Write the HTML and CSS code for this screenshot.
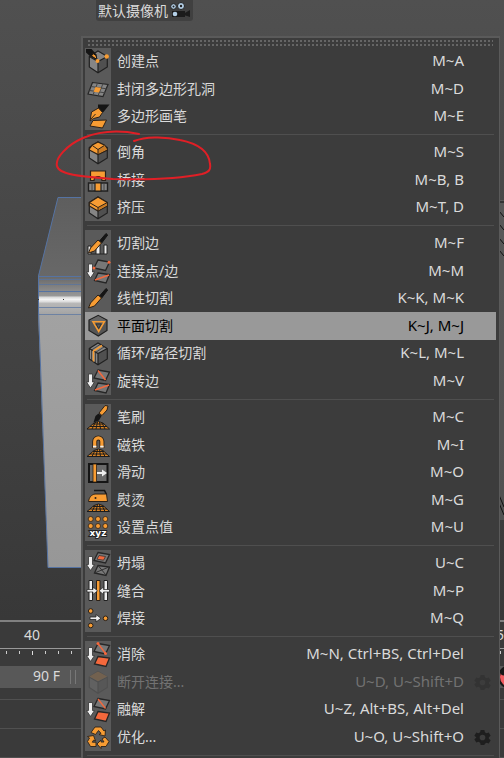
FILE: index.html
```html
<!DOCTYPE html>
<html lang="zh-CN">
<head>
    <meta charset="UTF-8">
    <meta name="viewport" content="width=device-width, initial-scale=1.0">
    <title>多边形菜单</title>
    <link rel="stylesheet" href="styles.css">
</head>
<body>
<!-- 公用图标 -->
<svg class="symbols" aria-hidden="true">
    <symbol id="down" viewBox="0 0 26 27">
        <path d="M3.500 6.500h4v8h2L5.500 20.500l-4-6h2z" fill="#eee" stroke="#333" stroke-width=".8"/>
    </symbol>
    <symbol id="hill" viewBox="0 0 26 27">
        <path d="M2 25l7-6 4.500-1.500 4.500 1.500 6.500 6z" fill="#d98324" stroke="#1b1b1b"/>
        <path d="M5 22.500h17M8 20h11M7 25l3-6M11 25l1.500-7M15.500 25l-1-7M20 25l-3-6" stroke="#1b1b1b" fill="none"/>
    </symbol>
    <symbol id="knife" viewBox="0 0 26 27">
        <path d="M14.500 11L21 3.500l1.700 1.500-6 8z" fill="#151515" stroke="#151515"/>
        <path d="M3.500 23l2-5 7.500-8 3.500 3-7 8z" fill="#f79c33" stroke="#2b2118"/>
    </symbol>
    <symbol id="quad-top" viewBox="0 0 26 27">
        <path d="M13 2.500l11.500 2L20.500 13 9 10.500z" fill="#777" stroke="#262626" stroke-width="1.300"/>
    </symbol>
    <symbol id="quad-bottom" viewBox="0 0 26 27">
        <path d="M13 15.500l11.500 1.500-3.500 8.500L9.500 23z" stroke="#262626" stroke-width="1.300"/>
    </symbol>
    <symbol id="cube" viewBox="0 0 26 27">
        <path d="M4.300 8.500L13 3l9.300 5.500v10.500L13 24.700l-8.700-5.700z" fill="#858585"/>
        <path d="M13 13.500l9.300-5v10.500L13 24.700z" fill="#505050"/>
        <path d="M4.300 8.500L13 3l9.300 5.500v10.500L13 24.700l-8.700-5.700zl8.700 5 9.300-5M13 13.500v11" fill="none" stroke="#202020" stroke-width="1.200"/>
    </symbol>
    <symbol id="gear" viewBox="0 0 18 18">
        <path d="M7 1h4l.5 2.500 1.700 1 2.400-.8 2 3.400-1.900 1.700v1.400l1.900 1.700-2 3.400-2.400-.8-1.700 1L11 17H7l-.5-2.500-1.700-1-2.400.8-2-3.400 1.900-1.700V8.800L.4 7.100l2-3.400 2.400.8 1.700-1zM9 6a3 3 0 100 6 3 3 0 000-6z" fill="currentColor" fill-rule="evenodd"/>
    </symbol>
</svg>

<main class="app">
    <section class="viewport">
        <header class="viewport-bar">
            <button class="camera" type="button">默认摄像机
                <svg width="21" height="16" viewBox="0 0 21 16">
                    <path d="M2 9h13v6H2zM14 11.500L20 8v7l-6-2z" fill="#1b1b1b"/>
                    <circle cx="3.500" cy="4.500" r="2.800" fill="#b4d0e8" stroke="#222"/>
                    <circle cx="11" cy="4" r="3.500" fill="#b4d0e8" stroke="#222"/>
                    <circle cx="3.500" cy="4.500" r="1" fill="#222"/>
                    <circle cx="11" cy="4" r="1.200" fill="#222"/>
                    <circle cx="5" cy="12" r="2.300" fill="#b4d0e8"/>
                </svg>
            </button>
        </header>
        <div class="objects">
            <svg class="model" width="82" height="400" viewBox="0 0 82 400">
                <defs>
                    <linearGradient id="top" x1="0" y1="0" x2="0" y2="1">
                        <stop offset="0" stop-color="#5e5e5e"/><stop offset="1" stop-color="#686868"/>
                    </linearGradient>
                    <linearGradient id="bevel" x1="0" y1="0" x2="0" y2="1">
                        <stop offset="0" stop-color="#666"/><stop offset=".5" stop-color="#979797"/>
                        <stop offset=".55" stop-color="#dcdcdc"/><stop offset=".6" stop-color="#f4f4f4"/>
                        <stop offset=".66" stop-color="#dcdcdc"/><stop offset=".7" stop-color="#b8b8b8"/><stop offset="1" stop-color="#a2a2a2"/>
                    </linearGradient>
                    <linearGradient id="front" x1="0" y1="0" x2="0" y2="1">
                        <stop offset="0" stop-color="#a2a2a2"/><stop offset="1" stop-color="#979797"/>
                    </linearGradient>
                </defs>
                <path d="M58 7h24v80H38z" fill="url(#top)"/>
                <path d="M38 120h44v258H48z" fill="url(#front)"/>
                <path d="M38 86h44v39H38z" fill="url(#bevel)"/>
                <path d="M82 7.500H58L38.500 86v35L48 377.500h34M38 86.500h44M38 101.500h44" fill="none" stroke="#5573a3"/>
                <path d="M38 89.500h44M38 94.500h44M38 117.500h44M38 124.500h44" stroke="#5573a3" stroke-opacity=".7"/>
                <path d="M38 109.500h1M63 109.500h1" stroke="#333"/>
            </svg>
            <svg class="mesh" width="5" height="330" viewBox="0 0 5 330">
                <path d="M0 10h5v320H0z" fill="#777" fill-opacity=".35"/>
                <path d="M0 12h5M0 21l5 6M0 34l5 6M0 48l5 6M0 60l5 6M0 305l5 12M0 313l5 12" stroke="#111" fill="none"/>
            </svg>
        </div>
    </section>

    <section class="timeline">
        <div class="frames"><span>40</span><span>75</span></div>
        <svg class="ticks" width="100%" height="17">
            <defs>
                <pattern id="tick" width="13" height="17" patternUnits="userSpaceOnUse">
                    <path d="M6.500 2v3" stroke="#ccc"/>
                </pattern>
            </defs>
            <rect width="100%" height="17" fill="url(#tick)"/>
            <path d="M32.500 2v4" stroke="#ddd"/>
        </svg>
        <div class="range">
            <input class="range-end" type="text" value="90 F" aria-label="结束帧">
            <span class="range-grip"></span>
            <svg class="record" width="24" height="24" viewBox="0 0 24 24">
                <circle cx="12" cy="12" r="11" fill="#f05a5f" stroke="#161616" stroke-width="2"/>
                <circle cx="6" cy="7" r="3.500" fill="#161616"/>
            </svg>
        </div>
        <div class="track"></div>
        <div class="track"></div>
        <div class="track"></div>
    </section>
</main>

<nav class="menu" aria-label="多边形工具">
    <div class="menu-grip"></div>

    <ul class="menu-group">
        <li><button class="item" type="button">
            <svg class="icon" viewBox="0 0 26 27">
                <use href="#cube"/>
                <path d="M1 1h5.500l5 5.500 1 6-6.500-3.500-5-4.500z" fill="#151515"/>
                <path d="M6.500 8l1.500-2.500 3 2 1 4z" fill="#f79c33" stroke="#151515"/>
                <circle cx="12.500" cy="13" r="2" fill="#f79c33"/><circle cx="21.700" cy="8.500" r="2.200" fill="#f79c33"/>
            </svg>
            <span class="name">创建点</span><kbd>M~A</kbd></button></li>
        <li><button class="item" type="button">
            <svg class="icon" viewBox="0 0 26 27">
                <path d="M7.500 7L23 9l-5 12L3 18.500z" fill="#858585" stroke="#262626" stroke-width="1.200"/>
                <path d="M6 11l15.500 2.300M4.500 15l15.500 2.300M12.500 7.500L8 19.500M18 8.200l-5 12" stroke="#444" fill="none"/>
                <path d="M10.500 11.500l5.500.8-2 4.700-5.500-.8z" fill="#f79c33"/>
            </svg>
            <span class="name">封闭多边形孔洞</span><kbd>M~D</kbd></button></li>
        <li><button class="item" type="button">
            <svg class="icon" viewBox="0 0 26 27">
                <path d="M13 1.500h11.500L18 9.500l-5-3.500z" fill="#151515"/>
                <path d="M8 17.500l13.500-.5-4 8-12.500-2z" fill="#f79c33" stroke="#2b2118"/>
                <path d="M13.500 5l4 4.500-3 4.500-6 1.500-3.500 2.500 1.500-9z" fill="#f79c33" stroke="#2b2118"/>
                <path d="M5.500 16.500l5-5.500" stroke="#2b2118"/>
            </svg>
            <span class="name">多边形画笔</span><kbd>M~E</kbd></button></li>
    </ul>

    <ul class="menu-group">
        <li><button class="item" type="button">
            <svg class="icon" viewBox="0 0 26 27">
                <use href="#cube"/>
                <path d="M4.300 10l3-4L13 3l6.300 3 3 4v1L13 15.500 4.300 11z" fill="#f79c33" stroke="#2b2118" stroke-width="1.200"/>
                <path d="M13 10.500l6.300-4.200 2.700 4-9 4.700z" fill="#c87a24"/>
                <path d="M7.300 6.500L13 10.500l6.300-4M13 10.500v5" fill="none" stroke="#2b2118"/>
            </svg>
            <span class="name">倒角</span><kbd>M~S</kbd></button></li>
        <li><button class="item" type="button">
            <svg class="icon" viewBox="0 0 26 27">
                <path d="M5.500 4.500h15V14H17a4 4 0 00-8 0H5.500z" fill="#f79c33" stroke="#2b2118" stroke-width="1.200"/>
                <path d="M3.500 16.500h19v8h-19z" fill="#858585" stroke="#202020" stroke-width="1.400"/>
                <path d="M10 16.500h6v8h-6z" fill="#f79c33" stroke="#202020" stroke-width="1.200"/>
                <path d="M7 17v7M19 17v7" stroke="#444"/>
            </svg>
            <span class="name">桥接</span><kbd>M~B, B</kbd></button></li>
        <li><button class="item" type="button">
            <svg class="icon" viewBox="0 0 26 27">
                <use href="#cube"/>
                <path d="M4.300 8.500L13 3l9.300 5.500V12L13 17l-8.700-5z" fill="#f79c33" stroke="#2b2118" stroke-width="1.200"/>
                <path d="M13 13.500l8.700-4.500v2.500L13 16.500z" fill="#c87a24"/>
                <path d="M4.300 8.500l8.700 5 9.300-5M13 13.500V17" fill="none" stroke="#2b2118"/>
            </svg>
            <span class="name">挤压</span><kbd>M~T, D</kbd></button></li>
    </ul>

    <ul class="menu-group">
        <li><button class="item" type="button">
            <svg class="icon" viewBox="0 0 26 27">
                <path d="M3 16h3v8H3zM11 15h4v9h-4zM19 15h3v9h-3z" fill="#eee" stroke="#222"/>
                <path d="M6 24h5M15 24h4" stroke="#222"/>
                <use href="#knife"/>
            </svg>
            <span class="name">切割边</span><kbd>M~F</kbd></button></li>
        <li><button class="item" type="button">
            <svg class="icon" viewBox="0 0 26 27">
                <use href="#down"/><use href="#quad-top"/><use href="#quad-bottom" fill="#777"/>
                <circle cx="9" cy="10.500" r="1.500" fill="#f4683c"/><circle cx="24" cy="4.700" r="1.500" fill="#f4683c"/>
                <path d="M10 22.500L24 17.500" stroke="#f4683c" stroke-width="1.500"/>
            </svg>
            <span class="name">连接点/边</span><kbd>M~M</kbd></button></li>
        <li><button class="item" type="button">
            <svg class="icon" viewBox="0 0 26 27"><use href="#knife"/></svg>
            <span class="name">线性切割</span><kbd>K~K, M~K</kbd></button></li>
        <li><button class="item active" type="button">
            <svg class="icon" viewBox="0 0 26 27">
                <path d="M13.300 3L22 7.700V18l-8.700 5.500L4 18V7.700z" fill="#555" stroke="#202020" stroke-width="1.200"/>
                <path d="M13.300 3.500L21.500 8 13.500 12 4.500 8z" fill="#666"/>
                <path d="M8 9.300h11.300l-5.600 9.700z" fill="#5c5c5c" stroke="#f79c33" stroke-width="1.600"/>
                <path d="M11 11.500h5.200L13.700 16z" fill="none" stroke="#333"/>
            </svg>
            <span class="name">平面切割</span><kbd>K~J, M~J</kbd></button></li>
        <li><button class="item" type="button">
            <svg class="icon" viewBox="0 0 26 27">
                <use href="#cube"/>
                <path d="M17 5.500L8.500 11v10.500" fill="none" stroke="#f79c33" stroke-width="1.500"/>
                <path d="M15 4.500L6.500 10v10M19 7l-8.500 5.500v10.500" fill="none" stroke="#282828" stroke-width=".7"/>
            </svg>
            <span class="name">循环/路径切割</span><kbd>K~L, M~L</kbd></button></li>
        <li><button class="item" type="button">
            <svg class="icon" viewBox="0 0 26 27">
                <use href="#down"/><use href="#quad-top"/><use href="#quad-bottom" fill="#777"/>
                <path d="M13 3l7.500 9.500M10 22.500L24 17.500" stroke="#f4683c" stroke-width="1.500"/>
            </svg>
            <span class="name">旋转边</span><kbd>M~V</kbd></button></li>
    </ul>

    <ul class="menu-group">
        <li><button class="item" type="button">
            <svg class="icon" viewBox="0 0 26 27">
                <use href="#hill"/>
                <path d="M20 1.500l3 .5-1 4-5 5.500-3-2.500z" fill="#f79c33" stroke="#2b2118"/>
                <path d="M13.500 9.500l3 2.500-2.500 4.500-5.500 2 2-6.500z" fill="#151515"/>
            </svg>
            <span class="name">笔刷</span><kbd>M~C</kbd></button></li>
        <li><button class="item" type="button">
            <svg class="icon" viewBox="0 0 26 27">
                <use href="#hill"/>
                <path d="M9.700 16.500V10a3.600 3.600 0 017.200 0v6.500" fill="none" stroke="#2b2118" stroke-width="5"/>
                <path d="M9.700 16V10a3.600 3.600 0 017.200 0v6" fill="none" stroke="#f79c33" stroke-width="3.200"/>
                <path d="M8 15.200h3.400M15.200 15.200h3.400" stroke="#eee" stroke-width="1.800"/>
            </svg>
            <span class="name">磁铁</span><kbd>M~I</kbd></button></li>
        <li><button class="item" type="button">
            <svg class="icon" viewBox="0 0 26 27">
                <path d="M4 5h18.500v18H4z" fill="#696969" stroke="#151515" stroke-width="2"/>
                <path d="M8 5h3.500v18H8z" fill="#f79c33" stroke="#2b2118" stroke-width=".8"/>
                <path d="M12 13h5v-2.500l5 3.500-5 3.500V15h-5z" fill="#eee"/>
            </svg>
            <span class="name">滑动</span><kbd>M~O</kbd></button></li>
        <li><button class="item" type="button">
            <svg class="icon" viewBox="0 0 26 27">
                <use href="#hill"/>
                <path d="M9 4h10.500l2 4" fill="none" stroke="#151515" stroke-width="1.600"/>
                <path d="M3.500 15c.5-4 3-7 6.500-7.500h11.500l1 7.500z" fill="#f79c33" stroke="#2b2118"/>
                <circle cx="10.500" cy="11.500" r="1" fill="#2b2118"/>
            </svg>
            <span class="name">熨烫</span><kbd>M~G</kbd></button></li>
        <li><button class="item" type="button">
            <svg class="icon" viewBox="0 0 26 27">
                <g fill="#f79c33" stroke="#2b2118" stroke-width=".8">
                    <circle cx="5.700" cy="5" r="2.500"/><circle cx="13" cy="5" r="2.500"/><circle cx="20.300" cy="5" r="2.500"/>
                    <circle cx="5.700" cy="12" r="2.500"/><circle cx="13" cy="12" r="2.500"/><circle cx="20.300" cy="12" r="2.500"/>
                </g>
                <text class="xyz" x="13" y="22" text-anchor="middle">xyz</text>
            </svg>
            <span class="name">设置点值</span><kbd>M~U</kbd></button></li>
    </ul>

    <ul class="menu-group">
        <li><button class="item" type="button">
            <svg class="icon" viewBox="0 0 26 27">
                <use href="#down"/><use href="#quad-top"/><use href="#quad-bottom" fill="#777"/>
                <path d="M14 5.500l6.500 1-2 3.700-6.500-1z" fill="#f4683c" stroke="#333" stroke-width=".8"/>
                <path d="M13 15.500l8 9.500M9.500 23L24 17" stroke="#333" fill="none"/>
            </svg>
            <span class="name">坍塌</span><kbd>U~C</kbd></button></li>
        <li><button class="item" type="button">
            <svg class="icon" viewBox="0 0 26 27">
                <path d="M4 3h3.500v20H4zM19 3h3.500v20H19z" fill="#eee" stroke="#222"/>
                <path d="M11.500 3H15v20h-3.500z" fill="#f79c33" stroke="#2b2118"/>
                <path d="M2 12h6V9.500l4.500 3.800L8 17v-2.500H2zM24.500 12h-6V9.500L14 13.300l4.500 3.700v-2.500h6z" fill="#eee" stroke="#222" stroke-width=".7"/>
            </svg>
            <span class="name">缝合</span><kbd>M~P</kbd></button></li>
        <li><button class="item" type="button">
            <svg class="icon" viewBox="0 0 26 27">
                <g fill="#f79c33" stroke="#2b2118"><circle cx="5.700" cy="6" r="2.300"/><circle cx="5.700" cy="20.500" r="2.300"/><circle cx="20.500" cy="13.300" r="2.300"/></g>
                <path d="M5 12h6V9.500l5 3.800-5 3.700v-2.500H5z" fill="#eee" stroke="#222" stroke-width=".8"/>
            </svg>
            <span class="name">焊接</span><kbd>M~Q</kbd></button></li>
    </ul>

    <ul class="menu-group">
        <li><button class="item" type="button">
            <svg class="icon" viewBox="0 0 26 27">
                <use href="#down"/><use href="#quad-top"/><use href="#quad-bottom" fill="#f4683c"/>
                <path d="M13 2.500l7.500 10" stroke="#f4683c" stroke-width="1.300"/>
                <circle cx="13" cy="2.500" r="1.500" fill="#f4683c"/><circle cx="20.500" cy="12.500" r="1.500" fill="#f4683c"/>
            </svg>
            <span class="name">消除</span><kbd>M~N, Ctrl+BS, Ctrl+Del</kbd></button></li>
        <li><button class="item" type="button" disabled>
            <svg class="icon" viewBox="0 0 26 27">
                <g opacity=".35"><use href="#cube" opacity=".5"/><path d="M4.300 8L13 3l9.300 5-9.300 4.500z" fill="#a0703c"/></g>
            </svg>
            <span class="name">断开连接...</span><kbd>U~D, U~Shift+D</kbd></button>
            <button class="gear" type="button" aria-label="断开连接选项" disabled><svg width="17" height="17"><use href="#gear"/></svg></button></li>
        <li><button class="item" type="button">
            <svg class="icon" viewBox="0 0 26 27">
                <use href="#down"/><use href="#quad-top"/><use href="#quad-bottom" fill="#f4683c"/>
                <path d="M13 3l7.500 9.500" stroke="#f4683c" stroke-width="1.300"/>
            </svg>
            <span class="name">融解</span><kbd>U~Z, Alt+BS, Alt+Del</kbd></button></li>
        <li><button class="item" type="button">
            <svg class="icon" viewBox="0 0 26 27">
                <g fill="#f79c33" stroke="#2b2118" stroke-width=".9" stroke-linejoin="round">
                    <path d="M6 9l4-5.500h6l3 4 1.500-1-.5 6-6-1.500 2-1.200L13.500 7 10.500 11z"/>
                    <path d="M20 13.500l4 4.500-3 5h-5v2l-4-4.500 4-4v2h3l-2-3z"/>
                    <path d="M11 23H5.500L2.500 18l2-3.500L2.500 13l6-1 2 5.500-2-.8-1.200 2H11z"/>
                </g>
            </svg>
            <span class="name">优化...</span><kbd>U~O, U~Shift+O</kbd></button>
            <button class="gear" type="button" aria-label="优化选项"><svg width="17" height="17"><use href="#gear"/></svg></button></li>
    </ul>

    <ul class="menu-group"></ul>
</nav>

<!-- 手绘标注 -->
<svg class="mark" width="160" height="54" viewBox="0 0 160 54" aria-hidden="true">
    <path d="M86 6C62 1 42 5 30 10C14 17 2 30 4 38C6 48 36 49 60 51C95 52 130 50 149 46C156 44 158 42 157 36C156 22 142 15 127 12C110 8 92 9 81 13"/>
</svg>
</body>
</html>
```
FILE: styles.css
```css
:root {
    --menu-bg: #3c3c3c;
    --icon-bg: #5a5a5a;
    --line: #4f4f4f;
    --text: #dadada;
    --highlight: #999999;
}

* {
    box-sizing: border-box;
}

body {
    margin: 0;
    height: 100vh;
    overflow: hidden;
    position: relative;
    background: #3a3a3a;
    color: var(--text);
    font-family: "Noto Sans", "Noto Sans CJK SC", sans-serif;
    font-size: 14px;
}

button,
input {
    font: inherit;
    color: inherit;
    border: none;
    background: none;
    padding: 0;
}

.symbols {
    position: absolute;
    width: 0;
    height: 0;
}

/* --- 视图 --- */
.app {
    height: 100%;
    display: flex;
    flex-direction: column;
}

.viewport {
    flex: 1;
    background: linear-gradient(#505050, #383838);
}

.viewport-bar {
    padding-left: 96px;
}

.camera {
    display: flex;
    align-items: center;
    gap: 2px;
    height: 21px;
    padding: 0 2px 2px;
    border-radius: 0 0 3px 3px;
    background: #404040;
}

.objects {
    display: flex;
    justify-content: space-between;
    padding-top: 169px;
}

/* --- 时间线 --- */
.timeline {
    height: 138px;
    border-top: 2px solid #808080;
    background: #3a3a3a;
}

.frames {
    display: flex;
    justify-content: space-between;
    height: 27px;
    padding-left: 24px;
    line-height: 25px;
    border-bottom: 1px solid #999999;
}

.ticks {
    display: block;
}

.range {
    display: flex;
    align-items: center;
    height: 22px;
    background: #585858;
}

.range-end {
    width: 60px;
    padding-bottom: 3px;
    text-align: right;
}

.range-grip {
    width: 6px;
    height: 14px;
    margin-left: 10px;
    border: solid #777777;
    border-width: 0 1px;
}

.record {
    margin-left: auto;
    margin-right: -18px;
}

.track {
    height: 29px;
    border-bottom: 1px solid #505050;
}

.range + .track {
    height: 12px;
}

/* --- 菜单 --- */
.menu {
    position: absolute;
    top: 36px;
    left: 81px;
    right: 4px;
    padding: 2px 3px 0 2px;
    border: solid #5a5a5a;
    border-width: 2px 1px 0 2px;
    background: var(--menu-bg);
}

.menu-grip {
    height: 6px;
    margin: 0 3px 2px;
    background:
        linear-gradient(transparent 2px, var(--menu-bg) 2px, var(--menu-bg) 4px, transparent 4px),
        repeating-linear-gradient(90deg, #666666 0 2px, var(--menu-bg) 2px 4px);
}

.menu-group {
    margin: 0;
    padding: 0;
    list-style: none;
}

.menu-group + .menu-group::before {
    content: "";
    display: block;
    height: 1px;
    margin: 4px 2px;
    background: var(--line);
}

.menu-group li {
    position: relative;
    height: 27px;
}

.menu-group li:nth-child(even) {
    height: 28px;
}

.item {
    display: flex;
    align-items: center;
    width: 100%;
    height: 100%;
    padding-right: 32px;
    text-align: left;
}

.icon {
    flex: none;
    width: 26px;
    height: 100%;
    background: var(--icon-bg);
}

.name,
kbd {
    padding-bottom: 3px;
}

.name {
    flex: 1;
    padding-left: 6px;
}

kbd {
    font-family: "Noto Sans", sans-serif;
    font-size: 15px;
}

.item.active,
.item.active .icon {
    background: var(--highlight);
    color: #000000;
}

.item:disabled {
    color: #727272;
}

.gear {
    position: absolute;
    top: 0;
    right: 5px;
    display: flex;
    align-items: center;
    height: 100%;
    color: #1e1e1e;
}

.gear:disabled {
    color: #333333;
}

.xyz {
    font-family: "DejaVu Sans", sans-serif;
    font-size: 9px;
    font-weight: 700;
    fill: #ffffff;
    stroke: #222222;
    stroke-width: 2px;
    paint-order: stroke;
}

/* --- 标注 --- */
.mark {
    position: absolute;
    top: 128px;
    left: 53px;
    pointer-events: none;
}

.mark path {
    fill: none;
    stroke: #e01f26;
    stroke-width: 2px;
    stroke-linecap: round;
}
```
